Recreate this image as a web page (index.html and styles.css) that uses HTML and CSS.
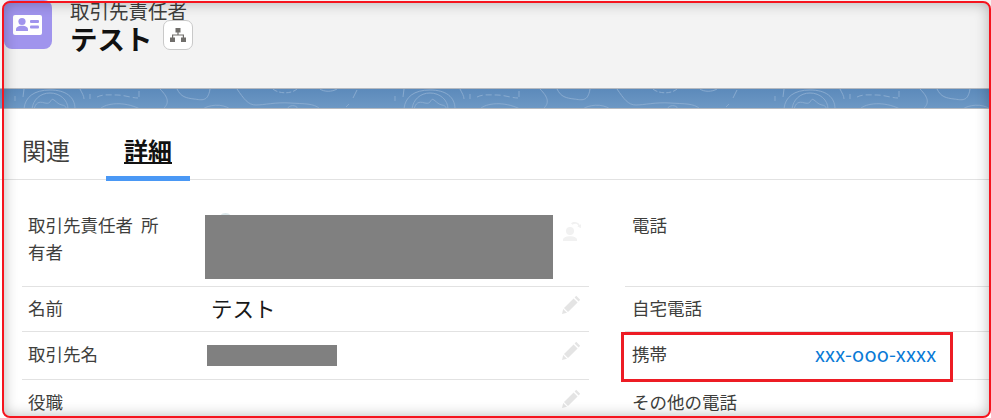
FILE: index.html
```html
<!DOCTYPE html>
<html lang="ja">
<head>
    <meta charset="UTF-8">
    <meta name="viewport" content="width=device-width, initial-scale=1.0">
    <title>取引先責任者 テスト</title>
    <link rel="stylesheet" href="styles.css">
</head>
<body>
    <div class="page">
        <header class="record-header">
            <div class="record-icon">
                <svg width="32" height="22" viewBox="0 0 32 22">
                    <rect x="1" y="1" width="29" height="20" rx="2" fill="#fff"/>
                    <circle cx="10" cy="7.5" r="3.6" fill="#a094ed"/>
                    <path d="M4 17v-1.5c0-2.4 2.6-3.7 6-3.7s6 1.3 6 3.7V17z" fill="#a094ed"/>
                    <rect x="18" y="6" width="9" height="3" rx="1" fill="#a094ed"/>
                    <rect x="18" y="11.5" width="9" height="3" rx="1" fill="#a094ed"/>
                </svg>
            </div>
            <div class="record-titles">
                <div class="record-type">取引先責任者</div>
                <div class="record-name">
                    <h1>テスト</h1>
                    <button class="hierarchy-button" type="button" aria-label="階層">
                        <svg width="16" height="14" viewBox="0 0 16 14" fill="#706e6b">
                            <rect x="5.5" y="0" width="5" height="4.5"/>
                            <rect x="0" y="9.5" width="5" height="4.5"/>
                            <rect x="11" y="9.5" width="5" height="4.5"/>
                            <path d="M7.4 4h1.2v2.4H14v3.5h-1.2V7.6H3.2v2.3H2V6.4h5.4z"/>
                        </svg>
                    </button>
                </div>
            </div>
        </header>

        <div class="banner">
            <svg width="100%" height="19">
                <defs>
                    <pattern id="topo" width="380" height="20" patternUnits="userSpaceOnUse">
                        <g fill="none" stroke="#88aacf" stroke-width="1">
                            <path d="M15 7V12M24 0 23 8"/>
                            <path d="M24 20C25 8 34 1 50 1S75 8 75 20"/>
                            <path d="M32 20C33 11 40 4 50 4S68 11 68 20"/>
                            <path d="M34 20C36 14 38 12 45 14S50 8 54 11 58 15 62 16 66 18 66 20"/>
                            <path d="M80 0C82 4 84 7 84 10"/>
                            <path d="M90 5V10"/>
                            <path d="M97 8C103 5 110 6 117 6S132 9 138 9M139 8V1" stroke-dasharray="6 3"/>
                            <path d="M100 20C106 14 124 12 140 20"/>
                            <path d="M160 0C168 8 170 14 163 20"/>
                            <path d="M177 0C181 8 186 9 194 10S208 13 210 0"/>
                            <path d="M203 20C208 16 222 14 230 20"/>
                            <path d="M237 0C244 10 248 16 256 16S276 13 290 14 314 14 320 20"/>
                            <path d="M273 0C277 4 290 6 297 0" stroke-dasharray="5 2"/>
                            <path d="M287 20C289 16 296 15 298 20"/>
                            <path d="M320 0C324 3 332 3 337 0"/>
                            <path d="M357 1 353 9M349 15 346 18"/>
                        </g>
                    </pattern>
                </defs>
                <rect width="100%" height="19" fill="url(#topo)"/>
            </svg>
        </div>

        <main class="record-body">
            <nav class="tabs">
                <a class="tab">関連</a>
                <a class="tab active">詳細</a>
            </nav>

            <section class="details">
                <div class="field field-tall">
                    <span class="field-label">取引先責任者 所有者</span>
                    <span class="owner-avatar"></span>
                    <span class="redacted redacted-owner"></span>
                    <svg class="edit-icon owner-icon" width="20" height="20" viewBox="0 0 20 20" fill="#f1f1f1">
                        <circle cx="8" cy="10" r="4"/>
                        <path d="M1 20v-1.2c0-2.4 3-3.6 7-3.6s7 1.2 7 3.6V20z"/>
                        <path d="M9 2.5C11.500 .3 16 .6 17.600 4l1.400-.8-.2 4-3.400-2 1-.6C15 2.400 12.500 2 10.500 3.800z"/>
                    </svg>
                </div>
                <div class="field field-tall field-right">
                    <span class="field-label">電話</span>
                </div>

                <div class="field">
                    <span class="field-label">名前</span>
                    <span class="field-value">テスト</span>
                    <svg class="edit-icon" width="20" height="20" viewBox="0 0 20 20" fill="#e4e4e4">
                        <path d="M14.2 1.8 18.2 5.8 16.6 7.4 12.6 3.4zM11.6 4.4 15.6 8.4 6 18 2 14zM1.2 15 5 18.8 0 20z"/>
                    </svg>
                </div>
                <div class="field field-right">
                    <span class="field-label">自宅電話</span>
                </div>

                <div class="field field-mid">
                    <span class="field-label">取引先名</span>
                    <span class="redacted redacted-account"></span>
                    <svg class="edit-icon" width="20" height="20" viewBox="0 0 20 20" fill="#e4e4e4">
                        <path d="M14.2 1.8 18.2 5.8 16.6 7.4 12.6 3.4zM11.6 4.4 15.6 8.4 6 18 2 14zM1.2 15 5 18.8 0 20z"/>
                    </svg>
                </div>
                <div class="field field-mid field-right">
                    <span class="field-label">携帯</span>
                    <a class="field-link">xxx-ooo-xxxx</a>
                    <div class="callout"></div>
                </div>

                <div class="field field-mid">
                    <span class="field-label">役職</span>
                    <svg class="edit-icon" width="20" height="20" viewBox="0 0 20 20" fill="#e4e4e4">
                        <path d="M14.2 1.8 18.2 5.8 16.6 7.4 12.6 3.4zM11.6 4.4 15.6 8.4 6 18 2 14zM1.2 15 5 18.8 0 20z"/>
                    </svg>
                </div>
                <div class="field field-mid field-right">
                    <span class="field-label">その他の電話</span>
                </div>
            </section>
        </main>
    </div>
    <div class="frame"></div>
</body>
</html>
```

FILE: styles.css
```css
html, body {
    margin: 0;
    height: 418px;
    overflow: hidden;
    background-color: #fff;
}

body {
    font-family: "Noto Sans CJK JP", "Noto Sans", sans-serif;
    color: #3e3e3c;
}

.page {
    height: 418px;
    overflow: hidden;
}

/* Header */
.record-header {
    display: flex;
    align-items: flex-start;
    gap: 18px;
    height: 88px;
    padding-left: 4px;
    box-sizing: border-box;
    background-color: #f3f3f3;
}

.record-icon {
    display: flex;
    align-items: center;
    justify-content: center;
    width: 48px;
    height: 49px;
    border-radius: 8px;
    background-color: #a094ed;
}

.record-type {
    font-size: 19.5px;
    line-height: 22px;
}

.record-name {
    display: flex;
    align-items: flex-start;
    gap: 10px;
}

.record-name h1 {
    margin: 0;
    font-size: 27.5px;
    line-height: 32px;
    font-weight: 700;
    color: #111;
}

.hierarchy-button {
    display: flex;
    align-items: center;
    justify-content: center;
    width: 30px;
    height: 30px;
    margin-top: -2px;
    padding: 0;
    border: 1px solid #c9c9c9;
    border-radius: 7px;
    background-color: #fff;
}

/* Banner */
.banner {
    height: 21px;
    box-sizing: border-box;
    background: linear-gradient(#5c8abb, #6d98c4);
    border-top: 1px solid #b4b9c0;
    border-bottom: 1px solid #b4b9c0;
    overflow: hidden;
}

.banner svg {
    display: block;
}

/* Tabs */
.tabs {
    display: flex;
    height: 71px;
    box-sizing: border-box;
    padding-left: 22px;
    border-bottom: 1px solid #e2e2e2;
}

.tab {
    font-size: 24px;
    line-height: 34px;
    padding-top: 24px;
    box-sizing: border-box;
    height: 72px;
}

.tab.active {
    width: 84px;
    margin-left: 36px;
    text-align: center;
    font-weight: 700;
    color: #111;
    text-decoration: underline;
    border-bottom: 5px solid #4a98f5;
}

/* Details */
.details {
    display: grid;
    grid-template-columns: 567px 366px;
    column-gap: 36px;
    padding: 29px 0 0 22px;
}

.field {
    position: relative;
    display: flex;
    align-items: flex-start;
    box-sizing: border-box;
    height: 45px;
    padding: 7px 7px 0 6px;
    border-bottom: 1px solid #e2e2e2;
    font-size: 17.5px;
    line-height: 27px;
    word-spacing: 4px;
}

.field-tall {
    height: 78px;
    padding-top: 2px;
}

.field-mid {
    height: 48px;
    padding-top: 8px;
}

.field-right {
    padding-left: 7px;
}

.field-label {
    flex: none;
    width: 142px;
    margin-right: 35px;
}

.field-right .field-label {
    width: 183px;
    margin-right: 0;
}

.field-value {
    padding-left: 6px;
    font-size: 21.5px;
    color: #181818;
}

.field-link {
    color: #0a7ad6;
    font-size: 20px;
    letter-spacing: 0.15px;
}

.edit-icon {
    margin-left: auto;
}

.owner-icon {
    margin-top: 10px;
}

.owner-avatar {
    position: absolute;
    left: 196px;
    top: 4px;
    width: 15px;
    height: 15px;
    border-radius: 50%;
    background-color: #dbe7ea;
}

.redacted {
    position: relative;
    display: block;
    background-color: #808080;
}

.redacted-owner {
    width: 348px;
    height: 64px;
    margin-top: 4px;
}

.redacted-account {
    width: 130px;
    height: 21px;
    margin: 5px 0 0 2px;
}

/* Red highlight around the mobile number */
.callout {
    position: absolute;
    left: -4px;
    top: 0;
    width: 332px;
    height: 50px;
    box-sizing: border-box;
    border: 3px solid #ed1c24;
}

/* Outer frame of the screenshot */
.frame {
    position: fixed;
    inset: 1px 0 0 2px;
    border: 2px solid #f5141e;
    border-radius: 8px;
    box-shadow: inset 0 0 14px rgba(0, 0, 0, 0.28);
    pointer-events: none;
}
```
